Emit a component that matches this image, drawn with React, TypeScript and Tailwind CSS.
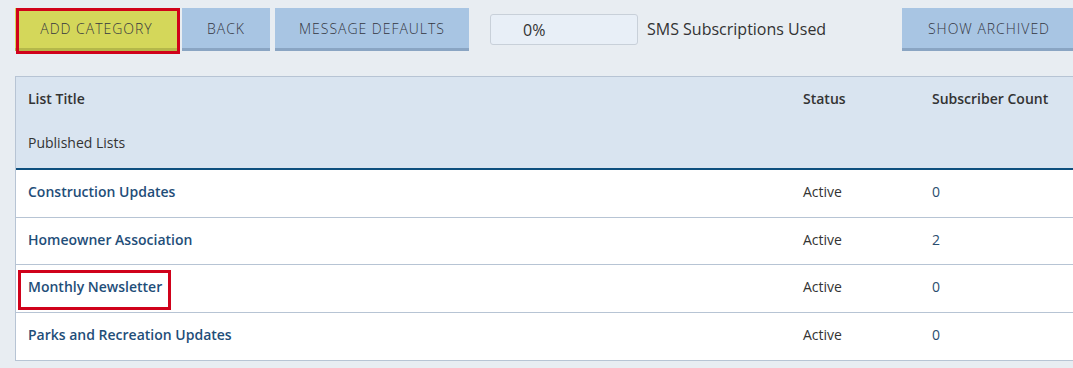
import { ReactNode } from 'react'

type ListRow = {
  title: string
  status: string
  count: number
  highlighted?: boolean
}

const rows: ListRow[] = [
  { title: 'Construction Updates', status: 'Active', count: 0 },
  { title: 'Homeowner Association', status: 'Active', count: 2 },
  { title: 'Monthly Newsletter', status: 'Active', count: 0, highlighted: true },
  { title: 'Parks and Recreation Updates', status: 'Active', count: 0 },
]

const fontStack = { fontFamily: '"Open Sans", "Noto Sans", sans-serif' }

function ToolbarButton({
  children,
  yellow,
  className = '',
}: {
  children: ReactNode
  yellow?: boolean
  className?: string
}) {
  return (
    <button
      type="button"
      className={`h-[43px] shrink-0 border-b-[3px] text-center text-[14px] font-light uppercase tracking-[0.07em] text-[#34363f] ${
        yellow
          ? 'border-[#b5b84a] bg-[#d4d75a]'
          : 'border-[#8aa5c3] bg-[#a8c5e3]'
      } ${className}`}
    >
      {children}
    </button>
  )
}

export default function App() {
  return (
    <div
      className="h-[368px] w-[1073px] overflow-hidden bg-[#e8edf2]"
      style={fontStack}
    >
      <div className="flex w-[1076px] items-center pl-[15px] pt-2">
        <div className="relative">
          <ToolbarButton yellow className="w-[163px]">
            Add Category
          </ToolbarButton>
          <div className="pointer-events-none absolute left-px top-0 h-[46px] w-[164px] border-[3px] border-[#d0021b]" />
        </div>
        <ToolbarButton className="ml-1 w-[88px]">Back</ToolbarButton>
        <ToolbarButton className="ml-[5px] w-[194px]">
          Message Defaults
        </ToolbarButton>
        <div className="ml-[21px] flex h-[31px] w-[148px] items-center rounded-[3px] border border-[#c8d0d9] bg-[#e8eff7] pl-[32px] text-[16px] text-[#333]">
          0%
        </div>
        <span className="ml-[9px] pb-px text-[16px] text-[#333]">
          SMS Subscriptions Used
        </span>
        <ToolbarButton className="ml-auto w-[174px]">Show Archived</ToolbarButton>
      </div>

      <div className="ml-[15px] mt-[25px] w-[1080px] border border-[#b7c4d4] bg-white">
        <div className="border-b-2 border-[#0e4f7e] bg-[#d9e4f0]">
          <div className="grid h-[43px] grid-cols-[775px_129px_1fr] items-center pb-px text-[14px] font-semibold text-[#333]">
            <div className="pl-3">List Title</div>
            <div className="pl-3">Status</div>
            <div className="pl-3">Subscriber Count</div>
          </div>
          <div className="flex h-[48px] items-center pb-[3px] pl-3 text-[14px] text-[#333]">
            Published Lists
          </div>
        </div>
        {rows.map((row, index) => (
          <div
            key={row.title}
            className={`grid h-[47.5px] grid-cols-[775px_129px_1fr] items-center pb-[3px] text-[14px] ${
              index < rows.length - 1 ? 'border-b border-[#b7c4d4]' : ''
            }`}
          >
            <div className="pl-3">
              <span className="relative font-semibold text-[#1f4e79]">
                {row.title}
                {row.highlighted ? (
                  <span className="pointer-events-none absolute -bottom-[14px] -left-[10px] -right-[9px] -top-[7px] border-[3px] border-[#d0021b]" />
                ) : null}
              </span>
            </div>
            <div className="pl-3 text-[#333]">{row.status}</div>
            <div className="pl-3 text-[#2a4d6e]">{row.count}</div>
          </div>
        ))}
      </div>
    </div>
  )
}
